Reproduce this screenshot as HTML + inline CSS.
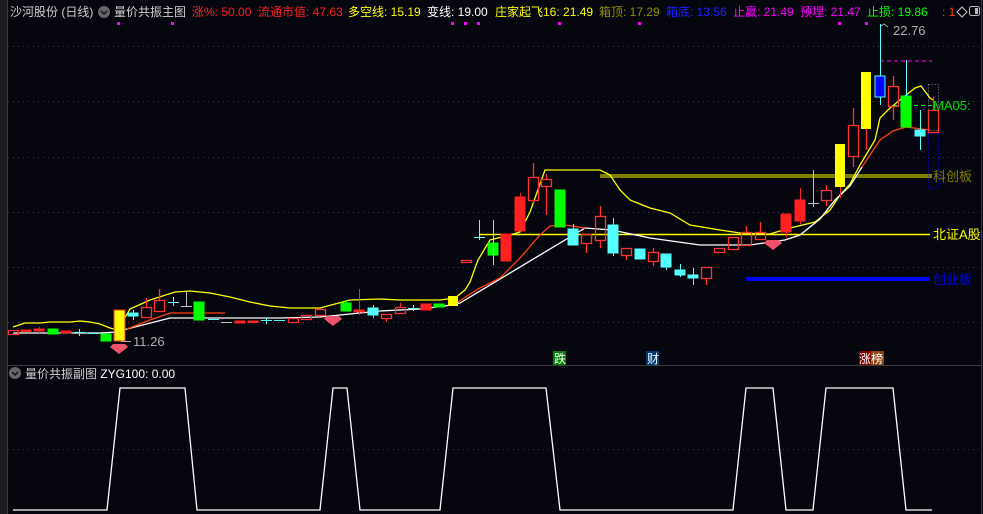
<!DOCTYPE html>
<html><head><meta charset="utf-8"><style>
body{margin:0;width:983px;height:514px;overflow:hidden;background:#05060e;font-family:"Liberation Sans","Noto Sans CJK SC",sans-serif;}
svg{position:absolute;left:0;top:0}
.t{position:absolute;top:5px;font-size:12px;white-space:nowrap;line-height:14px}
</style></head><body>
<svg width="983" height="514" viewBox="0 0 983 514" xmlns="http://www.w3.org/2000/svg">
<rect x="0" y="0" width="983" height="514" fill="#05060e"/>
<rect x="0" y="0" width="7" height="514" fill="#1d1d21"/>
<line x1="7.5" y1="0" x2="7.5" y2="514" stroke="#3a3a3e"/>
<line x1="981.5" y1="0" x2="981.5" y2="514" stroke="#3a3a3e"/>
<line x1="8" y1="365.5" x2="981" y2="365.5" stroke="#3a3a3e"/>
<g stroke="#3c3c44" stroke-dasharray="1,4">
<line x1="8" y1="46.5" x2="981" y2="46.5"/><line x1="8" y1="101.5" x2="981" y2="101.5"/>
<line x1="8" y1="157.5" x2="981" y2="157.5"/><line x1="8" y1="212.5" x2="981" y2="212.5"/>
<line x1="8" y1="267.5" x2="981" y2="267.5"/><line x1="8" y1="322.5" x2="981" y2="322.5"/>
<line x1="8" y1="449.5" x2="981" y2="449.5"/>
</g>
<g fill="#ff00ff">
<rect x="117" y="22" width="3" height="3"/><rect x="171" y="22" width="3" height="3"/><rect x="451" y="22" width="3" height="3"/><rect x="464" y="22" width="3" height="3"/><rect x="477" y="22" width="3" height="3"/><rect x="558" y="22" width="3" height="3"/><rect x="638" y="22" width="3" height="3"/><rect x="838" y="22" width="3" height="3"/><rect x="865" y="22" width="3" height="3"/>
</g>
<line x1="600" y1="176" x2="932" y2="176" stroke="#808000" stroke-width="4"/>
<line x1="480" y1="234.5" x2="930" y2="234.5" stroke="#ffff00" stroke-width="1.5"/>
<line x1="746" y1="279" x2="930" y2="279" stroke="#0000ff" stroke-width="4"/>
<line x1="880" y1="61" x2="932" y2="61" stroke="#ff00ff" stroke-dasharray="4,3"/>
<line x1="893" y1="105.5" x2="933" y2="105.5" stroke="#00ff00" stroke-dasharray="4,3"/>
<rect x="928.5" y="84.5" width="10" height="46" fill="none" stroke="#888" stroke-dasharray="1,2"/>
<rect x="928.5" y="133.5" width="10" height="55" fill="none" stroke="#0000ff" stroke-dasharray="1,2"/>
<polyline fill="none" stroke="#ffff00" stroke-width="1.3" points="13,327 25,323 40,323 50,322 70,322 80,321 90,322 100,324 110,328 118,330 130,309 150,300 175,292 190,291 210,293 230,297 250,302 270,306 290,308 320,308 335,304 350,300 380,299 400,300 440,300 455,298 465,290 470,282 478,260 490,240 510,235 520,232 530,212 545,170 600,170 610,175 620,190 630,200 650,208 670,213 690,225 720,230 740,233 770,234 790,228 815,222 830,210 840,195 850,184 860,165 875,140 880,118 890,108 905,96 915,88 921,86 930,98 933,100"/>
<polyline fill="none" stroke="#ffffff" stroke-width="1.3" points="13,333 60,333 100,333 118,332 127,329 170,318 235,318 280,318 320,317 350,314 380,311 420,309 445,306 460,303 585,228 612,230 650,238 700,245 750,245 785,240 800,235 820,219 835,200 850,186 862,167"/>
<polyline fill="none" stroke="#ff4010" stroke-width="1.3" points="127,329 150,320 170,313 225,313"/>
<polyline fill="none" stroke="#ff4010" stroke-width="1.3" points="458,302 478,289 500,278 520,258 540,235 550,226 565,225 585,228"/>
<polyline fill="none" stroke="#ff4010" stroke-width="1.3" points="862,167 880,140 893,131 906,127 930,130"/>
<g fill="none" stroke="#ff3030" stroke-width="1.3">
<rect x="8.5" y="330.5" width="10" height="4"/>
<rect x="141.5" y="307.5" width="10" height="10"/><line x1="146.5" y1="298" x2="146.5" y2="307"/>
<rect x="154.5" y="300.5" width="10" height="11"/><line x1="159.5" y1="289" x2="159.5" y2="300"/>
<rect x="288.5" y="318.5" width="10" height="4"/>
<rect x="301.5" y="315.5" width="10" height="4"/>
<rect x="315.5" y="309.5" width="10" height="6"/>
<rect x="381.5" y="314.5" width="10" height="4"/><line x1="386.5" y1="318" x2="386.5" y2="322"/>
<rect x="395.5" y="307.5" width="10" height="6"/><line x1="400.5" y1="303" x2="400.5" y2="307"/>
<rect x="461.5" y="260.5" width="10" height="2"/>
<rect x="528.5" y="177.5" width="10" height="23"/><line x1="533.5" y1="163" x2="533.5" y2="177"/><line x1="533.5" y1="201" x2="533.5" y2="203"/>
<rect x="541.5" y="179.5" width="10" height="7"/><line x1="546.5" y1="174" x2="546.5" y2="179"/><line x1="546.5" y1="187" x2="546.5" y2="215"/>
<rect x="581.5" y="234.5" width="10" height="9"/><line x1="586.5" y1="244" x2="586.5" y2="253"/>
<rect x="595.5" y="216.5" width="10" height="24"/><line x1="600.5" y1="206" x2="600.5" y2="216"/><line x1="600.5" y1="241" x2="600.5" y2="248"/>
<rect x="621.5" y="248.5" width="10" height="7"/><line x1="626.5" y1="256" x2="626.5" y2="260"/>
<rect x="648.5" y="252.5" width="10" height="9"/><line x1="653.5" y1="248" x2="653.5" y2="252"/><line x1="653.5" y1="262" x2="653.5" y2="266"/>
<rect x="701.5" y="267.5" width="10" height="11"/><line x1="706.5" y1="279" x2="706.5" y2="285"/>
<rect x="714.5" y="248.5" width="10" height="4"/>
<rect x="728.5" y="237.5" width="10" height="12"/>
<rect x="741.5" y="232.5" width="10" height="13"/><line x1="746.5" y1="226" x2="746.5" y2="232"/>
<rect x="755.5" y="232.5" width="10" height="7"/><line x1="760.5" y1="222" x2="760.5" y2="232"/>
<rect x="821.5" y="190.5" width="10" height="10"/><line x1="826.5" y1="185" x2="826.5" y2="190"/><line x1="826.5" y1="201" x2="826.5" y2="206"/>
<rect x="848.5" y="125.5" width="10" height="31"/><line x1="853.5" y1="108" x2="853.5" y2="125"/><line x1="853.5" y1="157" x2="853.5" y2="167"/>
<rect x="888.5" y="86.5" width="10" height="20"/><line x1="893.5" y1="76" x2="893.5" y2="86"/><line x1="893.5" y1="107" x2="893.5" y2="120"/>
<rect x="928.5" y="110.5" width="10" height="22"/><line x1="933.5" y1="97" x2="933.5" y2="110"/>
<line x1="866.5" y1="129" x2="866.5" y2="150"/>
</g>
<g fill="#ff2020" stroke="#ff2020" stroke-width="1">
<rect x="21" y="330" width="10" height="1.5"/><rect x="34" y="329" width="10" height="2"/><line x1="39.5" y1="327" x2="39.5" y2="333"/>
<rect x="61" y="331" width="10" height="2"/>
<rect x="235" y="321" width="10" height="2"/><rect x="248" y="321" width="10" height="1.5"/>
<rect x="354" y="310" width="10" height="2"/><line x1="359.5" y1="289" x2="359.5" y2="315"/>
<rect x="421" y="304" width="10" height="6"/>
<rect x="501" y="234" width="10" height="27"/>
<rect x="515" y="197" width="10" height="34"/><line x1="520.5" y1="193" x2="520.5" y2="197"/>
<rect x="781" y="214" width="10" height="18"/><line x1="786.5" y1="232" x2="786.5" y2="237"/>
<rect x="795" y="200" width="10" height="21"/><line x1="800.5" y1="188" x2="800.5" y2="224"/>
</g>
<g fill="#00ff00" stroke="#00ff00">
<rect x="48" y="329" width="10" height="5"/>
<rect x="101" y="334" width="10" height="7"/>
<rect x="194" y="302" width="10" height="18"/>
<rect x="341" y="303" width="10" height="8"/><line x1="346.5" y1="300" x2="346.5" y2="303"/>
<rect x="434" y="304" width="10" height="3"/>
<rect x="488" y="243" width="10" height="12"/>
<rect x="555" y="190" width="10" height="37"/>
<rect x="901" y="96" width="10" height="31"/>
</g>
<g fill="#55ffff" stroke="#55ffff">
<line x1="74" y1="332.5" x2="85" y2="332.5"/><line x1="79.5" y1="329" x2="79.5" y2="336"/>
<line x1="88" y1="333.5" x2="99" y2="333.5"/>
<rect x="128" y="313" width="10" height="3"/><line x1="133.5" y1="310" x2="133.5" y2="320"/>
<line x1="168" y1="302.5" x2="179" y2="302.5"/><line x1="173.5" y1="297" x2="173.5" y2="306"/>
<line x1="208" y1="319.5" x2="219" y2="319.5"/>
<line x1="261" y1="320.5" x2="272" y2="320.5"/><line x1="266.5" y1="318" x2="266.5" y2="324"/>
<line x1="274" y1="320.5" x2="285" y2="320.5"/>
<rect x="368" y="308" width="10" height="7"/><line x1="373.5" y1="305" x2="373.5" y2="318"/>
<line x1="408" y1="308.5" x2="419" y2="308.5"/><line x1="413.5" y1="305" x2="413.5" y2="311"/>
<line x1="474" y1="237.5" x2="485" y2="237.5"/><line x1="479.5" y1="220" x2="479.5" y2="240"/>
<line x1="493.5" y1="220" x2="493.5" y2="265"/>
<rect x="568" y="229" width="10" height="16"/><line x1="573.5" y1="224" x2="573.5" y2="229"/>
<rect x="608" y="225" width="10" height="28"/><line x1="613.5" y1="218" x2="613.5" y2="256"/>
<rect x="635" y="249" width="10" height="10"/>
<rect x="661" y="254" width="10" height="13"/><line x1="666.5" y1="267" x2="666.5" y2="270"/>
<rect x="675" y="270" width="10" height="5"/><line x1="680.5" y1="264" x2="680.5" y2="277"/>
<rect x="688" y="275" width="10" height="3"/><line x1="693.5" y1="268" x2="693.5" y2="285"/>
<rect x="915" y="130" width="10" height="6"/><line x1="920.5" y1="110" x2="920.5" y2="150"/>
<line x1="880.5" y1="24" x2="880.5" y2="105"/>
<line x1="906.5" y1="60" x2="906.5" y2="96"/>
</g>
<g stroke="#c0c0c0">
<line x1="181" y1="306.5" x2="192" y2="306.5"/><line x1="186.5" y1="291" x2="186.5" y2="307"/>
<line x1="221" y1="322.5" x2="232" y2="322.5"/>
<line x1="808" y1="203.5" x2="819" y2="203.5"/><line x1="813.5" y1="170" x2="813.5" y2="207"/>
</g>
<rect x="114" y="310" width="11" height="31" fill="#ffff00" stroke="#ff3030"/>
<rect x="448" y="296" width="10" height="10" fill="#ffff00"/>
<rect x="835" y="144" width="10" height="43" fill="#ffff00"/><line x1="840.5" y1="187" x2="840.5" y2="198" stroke="#ff3030"/>
<rect x="861" y="72" width="10" height="57" fill="#ffff00"/>
<rect x="875" y="76" width="10" height="21" fill="#0000ff" stroke="#55ffff"/>
<g fill="#f0506a"><path d="M113 344 h12 l3 3 -9 7 -9 -7z"/><path d="M327 316 h12 l3 3 -9 7 -9 -7z"/><path d="M767 240 h12 l3 3 -9 7 -9 -7z"/></g>
<line x1="121" y1="341.5" x2="131" y2="341.5" stroke="#aaa"/>
<text x="133" y="346" fill="#b0b0b0" font-size="13" font-family="Liberation Sans">11.26</text>
<path d="M881 26 l3 -2 4 3" stroke="#aaa" fill="none"/>
<text x="893" y="35" fill="#b0b0b0" font-size="13" font-family="Liberation Sans">22.76</text>
<text x="933" y="110" fill="#00e000" font-size="13" font-family="Liberation Sans">MA05:</text>
<text x="933" y="181" fill="#808000" font-size="13" font-family="Liberation Sans,Noto Sans CJK SC,sans-serif">科创板</text>
<text x="933" y="239" fill="#ffff00" font-size="13" font-family="Liberation Sans,Noto Sans CJK SC,sans-serif">北证A股</text>
<text x="933" y="284" fill="#0000ee" font-size="13" font-family="Liberation Sans,Noto Sans CJK SC,sans-serif">创业板</text>
<rect x="553" y="351" width="13" height="14" fill="#008000"/><text x="554" y="363" fill="#fff" font-size="12" font-family="Noto Sans CJK SC,sans-serif">跌</text>
<rect x="646" y="351" width="13" height="14" fill="#003870"/><text x="647" y="363" fill="#fff" font-size="12" font-family="Noto Sans CJK SC,sans-serif">财</text>
<rect x="859" y="351" width="12" height="14" fill="#800000"/><rect x="871" y="351" width="13" height="14" fill="#8b4513"/><text x="859" y="363" fill="#fff" font-size="12" font-family="Noto Sans CJK SC,sans-serif">涨榜</text>
<polyline fill="none" stroke="#ffffff" stroke-width="1.3" points="13,510 107,510 120,388 185,388 197,510 320,510 333,388 347,388 360,510 440,510 453,388 546,388 560,510 733,510 746,388 773,388 786,510 813,510 826,388 893,388 906,510 932,510"/>
<circle cx="15" cy="373" r="6" fill="#666"/><path d="M12 372 l3 3 3 -3" stroke="#111" fill="none" stroke-width="1.5"/>
<text x="25" y="378" fill="#d0d0d0" font-size="12" font-family="Liberation Sans,Noto Sans CJK SC,sans-serif">量价共振副图 <tspan fill="#fff">ZYG100: 0.00</tspan></text>
<circle cx="104" cy="12" r="6" fill="#666"/><path d="M101 11 l3 3 3 -3" stroke="#111" fill="none" stroke-width="1.5"/>
<path d="M957 12 l5 -5 5 5 -5 5z" fill="none" stroke="#ccc"/>
<rect x="969.5" y="6.5" width="10" height="9" rx="2" fill="none" stroke="#bbb"/><rect x="975" y="8" width="3" height="6" fill="#bbb"/>
</svg>
<div class="t" style="left:10px;color:#d0d0d0">沙河股份 (日线)</div>
<div class="t" style="left:114px;color:#d0d0d0">量价共振主图</div>
<div class="t" style="left:192px;color:#ff2020">涨%: 50.00</div>
<div class="t" style="left:258px;color:#ff2020">流通市值: 47.63</div>
<div class="t" style="left:348px;color:#ffff00">多空线: 15.19</div>
<div class="t" style="left:427px;color:#ffffff">变线: 19.00</div>
<div class="t" style="left:495px;color:#ffff00">庄家起飞16: 21.49</div>
<div class="t" style="left:599px;color:#909000">箱顶: 17.29</div>
<div class="t" style="left:666px;color:#2020ff">箱底: 13.56</div>
<div class="t" style="left:733px;color:#ff00ff">止赢: 21.49</div>
<div class="t" style="left:800px;color:#ff00ff">预埋: 21.47</div>
<div class="t" style="left:867px;color:#00ff00">止损: 19.86</div>
<div class="t" style="left:942px;color:#ff4010">: 1</div>
</body></html>
